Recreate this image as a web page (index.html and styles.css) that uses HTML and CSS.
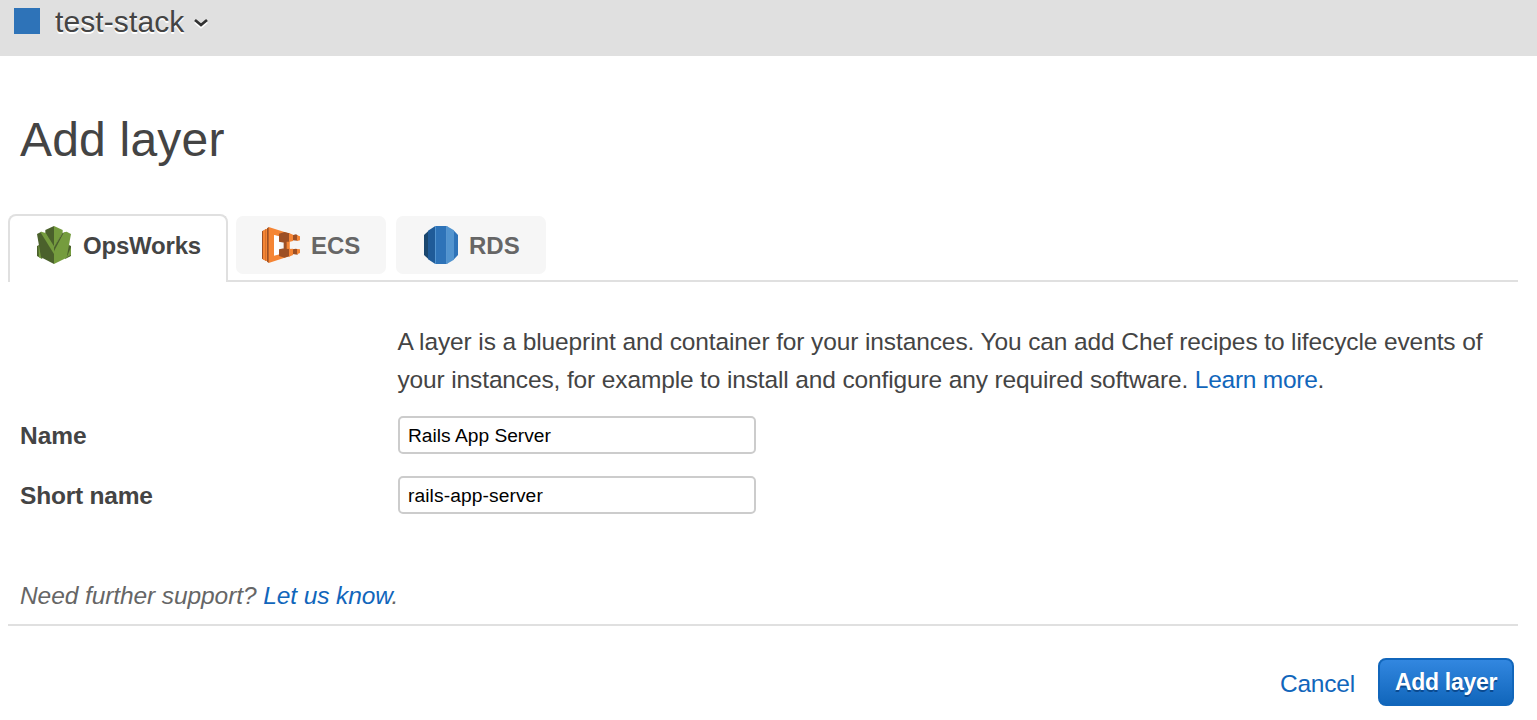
FILE: index.html
```html
<!DOCTYPE html>
<html lang="en">
<head>
<meta charset="utf-8">
<title>Add layer</title>
<link rel="stylesheet" href="styles.css">
</head>
<body>
<header class="stack-bar">
  <span class="stack-color"></span>
  <span class="stack-name">test-stack</span>
  <svg class="chevron" width="16" height="12" viewBox="0 0 16 12"><path class="chevron-shadow" d="M2 5l6 5 6-5"/><path class="chevron-line" d="M2 3l6 5 6-5"/></svg>
</header>
<main class="page">
  <h1 class="title">Add layer</h1>
  <nav class="tabs">
    <a class="tab tab-active">
      <svg class="icon" width="34" height="38" viewBox="21 18 102 114">
        <path fill="#4b612c" d="M21 78l8-4 8 43-16-9zM123 78l-8-4-10 43 18-9z"/>
        <path fill="#759c3e" d="M25 76l10 10v30l-8-4z"/>
        <path fill="#4b612c" d="M72 18L46 30v10l26 48z"/>
        <path fill="#759c3e" d="M72 18l26 12v10L72 84z"/>
        <path fill="#4b612c" d="M21 42l13-7 40 62-2 35-39-20z"/>
        <path fill="#759c3e" d="M31 36l3-1 13 4 29 46-4 17z"/>
        <path fill="#4b612c" d="M97 40l7-3-32 65V82z"/>
        <path fill="#759c3e" d="M102 37l8-2 13 7-13 71-38 19V94z"/>
        <path fill="#759c3e" d="M123 82v23l-13 7z"/>
      </svg>
      <span>OpsWorks</span>
    </a>
    <a class="tab tab-ecs">
      <svg class="icon icon-ecs" width="38" height="36" viewBox="21 21 114 108">
        <path fill="#9d5025" d="M21 34l5-3v88l-5-3zM29 29l4-2v96l-4-2z"/>
        <path fill="#f58534" d="M24 32l6-3v92l-6-2zM31 28l6-2v98l-6-2z"/>
        <path fill="#9d5025" d="M36 25l6-4v108l-6-4z"/>
        <path fill="#f58534" fill-rule="evenodd" d="M41 21l64 20v67l-64 21zM57 45v60l36-8V53z"/>
        <path fill="#fff" d="M57 46l17 4v53l-17 4z"/>
        <path fill="#f6f6f6" d="M103 65h32v20h-32z"/>
        <path fill="#9d5025" d="M72 41l16-5 15 4v26l-15 2-16-3zM112 46l11-3 5 3v16l-16-1zM72 88l16-3 15 2v22l-15 4-16-5zM112 88l11-2 5 2v16l-16-2zM86 66h10v20H86z"/>
        <path fill="#f58534" d="M102 39l12 5v19l-12 3zM126 46l9 3v12l-9 2zM102 87l12-1v19l-12 5zM126 87l9 1v11l-9 4zM95 65h9v21h-9z"/>
      </svg>
      <span>ECS</span>
    </a>
    <a class="tab tab-rds">
      <svg class="icon" width="34" height="38" viewBox="27 18 102 114">
        <path fill="#1a476f" d="M27 45l13-12v84L27 105z"/>
        <path fill="#1f5b98" d="M39 32l22-14v114l-22-14z"/>
        <path fill="#2e73b8" d="M61 18h34v114H61z"/>
        <path fill="#5294cf" d="M95 18l22 13v88l-22 13z"/>
        <path fill="#2e73b8" d="M117 32l12 13v60l-12 13z"/>
        <path fill="#5294cf" d="M60 18h3v114h-3zM94 18h3v114h-3z"/>
      </svg>
      <span>RDS</span>
    </a>
  </nav>
  <form class="form">
    <p class="intro">A layer is a blueprint and container for your instances. You can add Chef recipes to lifecycle events of<br><span class="intro-second">your instances, for example to install and configure any required software. <a class="link learn">Learn more</a>.</span></p>
    <label class="label" for="name">Name</label>
    <input class="field" id="name" type="text" value="Rails App Server">
    <label class="label label-short" for="short">Short name</label>
    <input class="field field-short" id="short" type="text" value="rails-app-server">
  </form>
  <p class="support">Need further support? <a class="link">Let us know</a>.</p>
  <footer class="actions">
    <a class="link cancel">Cancel</a>
    <button class="submit" type="button">Add layer</button>
  </footer>
</main>
</body>
</html>
```
FILE: styles.css
```css
* { box-sizing: border-box; }
body {
  margin: 0;
  height: 720px;
  overflow: hidden;
  background: #fff;
  color: #444;
  font: 24.5px/38px "Liberation Sans", Arial, sans-serif;
}
.stack-bar {
  display: flex;
  align-items: center;
  height: 56px;
  padding: 0 14px 12px;
  background: #e0e0e0;
}
.stack-color { width: 26px; height: 26px; margin: -2px 15px 0 0; background: #2e73b8; }
.stack-name { font-size: 30px; line-height: 44px; letter-spacing: .1px; text-shadow: 0 2px 0 #fff; }
.chevron { margin: 2px 0 0 9px; fill: none; stroke-width: 2.7; }
.chevron-shadow { stroke: #fff; }
.chevron-line { stroke: #333; }
.page { padding: 0 19px 0 8px; }
.title { margin: 0; padding: 55px 0 0 12px; height: 158px; font-size: 48px; line-height: 58px; font-weight: 400; letter-spacing: .2px; }
.tabs { display: flex; height: 68px; box-shadow: inset 0 -2px #e0e0e0; }
.tab {
  display: flex;
  align-items: center;
  width: 150px;
  height: 58px;
  margin: 2px 10px 0 0;
  padding-left: 28px;
  gap: 11px;
  border-radius: 7px;
  background: #f6f6f6;
  color: #666;
  font-size: 24px;
  font-weight: 700;
}
.tab span { padding-top: 1px; }
.tab-active {
  width: 220px;
  height: 68px;
  margin: 0 8px 0 0;
  padding: 0 0 8px 27px;
  gap: 12px;
  border: 2px solid #e0e0e0;
  border-bottom: 0;
  border-radius: 8px 8px 0 0;
  background: #fff;
  color: #444;
  letter-spacing: -.2px;
}
.tab-ecs { padding-left: 26px; gap: 11px; }
.icon { display: block; flex: none; }
.form {
  display: grid;
  grid-template-columns: 378px 358px;
  grid-template-rows: 71px 38px 38px;
  row-gap: 22px;
  padding: 41px 0 0 12px;
}
.intro { grid-column: 2; width: 1120px; margin: 0 0 -5px -.5px; white-space: nowrap; letter-spacing: -.11px; }
.intro-second { letter-spacing: -.135px; }
.learn { letter-spacing: -.25px; }
.label { padding-top: 1px; line-height: 37px; font-weight: 700; }
.label-short { letter-spacing: -.2px; }
.field {
  width: 358px;
  height: 38px;
  padding: 1px 8px 0;
  border: 2px solid #ccc;
  border-radius: 5px;
  background: #fff;
  color: #000;
  font: 19.2px "Liberation Sans", Arial, sans-serif;
}
.field-short { letter-spacing: .1px; }
.link { color: #1166bb; }
.support {
  margin: 62px 0 0;
  padding: 1px 12px 0;
  height: 50px;
  border-bottom: 2px solid #e0e0e0;
  color: #666;
  font-style: italic;
  letter-spacing: -.09px;
}
.actions { display: flex; justify-content: flex-end; align-items: center; padding: 32px 4px 0 0; gap: 23px; }
.cancel { padding-top: 3px; letter-spacing: -.2px; }
.submit {
  width: 136px;
  height: 48px;
  padding: 0;
  border: 2px solid #1166bb;
  border-radius: 8px;
  background: linear-gradient(#3287e0, #1166bb);
  color: #fff;
  font: 700 23px "Liberation Sans", Arial, sans-serif;
  letter-spacing: -.3px;
  text-shadow: 0 2px 0 #0a4a90;
}
```
